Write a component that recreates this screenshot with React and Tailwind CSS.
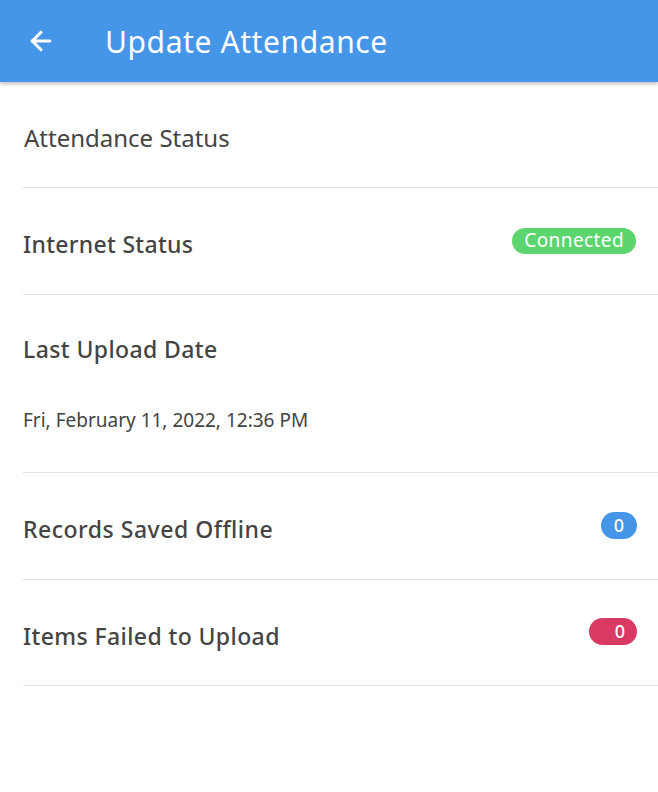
import { ArrowLeft } from "lucide-react";

const font = { fontFamily: '"Noto Sans", "Open Sans", sans-serif' };

function Row({ children, className = "" }) {
  return (
    <div className={`ml-[23px] border-b border-[#e2e2e2] ${className}`}>
      {children}
    </div>
  );
}

export default function App() {
  return (
    <div className="w-[658px] h-[792px] bg-white text-[#444]" style={font}>
      <header className="h-[82px] bg-[#4596e9] flex items-center shadow-[0_2px_4px_rgba(0,0,0,0.25)] relative z-10">
        <ArrowLeft className="ml-[26px] text-white" size={30} strokeWidth={2.5} />
        <h1 className="ml-[49px] text-white text-[30px] tracking-[0.6px] pt-[1px]">
          Update Attendance
        </h1>
      </header>

      <Row className="h-[106px] flex items-center pt-[6px]">
        <span className="text-[24px] pl-[1px]">Attendance Status</span>
      </Row>

      <Row className="h-[107px] flex items-center justify-between pr-[22px]">
        <span className="text-[23px] font-medium tracking-[0.3px] pt-[7px]">Internet Status</span>
        <span className="h-[26px] px-[12px] rounded-full bg-[#5dd56f] text-white text-[19px] tracking-[0.4px] flex items-center -mt-[1px]">
          Connected
        </span>
      </Row>

      <Row className="h-[178px] pt-[38px]">
        <div className="text-[23px] font-medium tracking-[0.4px] leading-[32px]">Last Upload Date</div>
        <div className="mt-[42px] text-[19px] leading-[26px]">
          Fri, February 11, 2022, 12:36 PM
        </div>
      </Row>

      <Row className="h-[107px] flex items-center justify-between pr-[21px]">
        <span className="text-[23px] font-medium tracking-[0.5px] pt-[7px]">Records Saved Offline</span>
        <span className="h-[27px] w-[36px] rounded-full bg-[#4596e9] text-white text-[18px] font-medium flex items-center justify-center -mt-[2px]">
          0
        </span>
      </Row>

      <Row className="h-[106px] flex items-center justify-between pr-[21px]">
        <span className="text-[23px] font-medium tracking-[0.4px] pt-[7px]">Items Failed to Upload</span>
        <span className="h-[27px] w-[48px] rounded-full bg-[#d83a63] text-white text-[18px] font-medium flex items-center justify-end pr-[12px] -mt-[2px]">
          0
        </span>
      </Row>
    </div>
  );
}
